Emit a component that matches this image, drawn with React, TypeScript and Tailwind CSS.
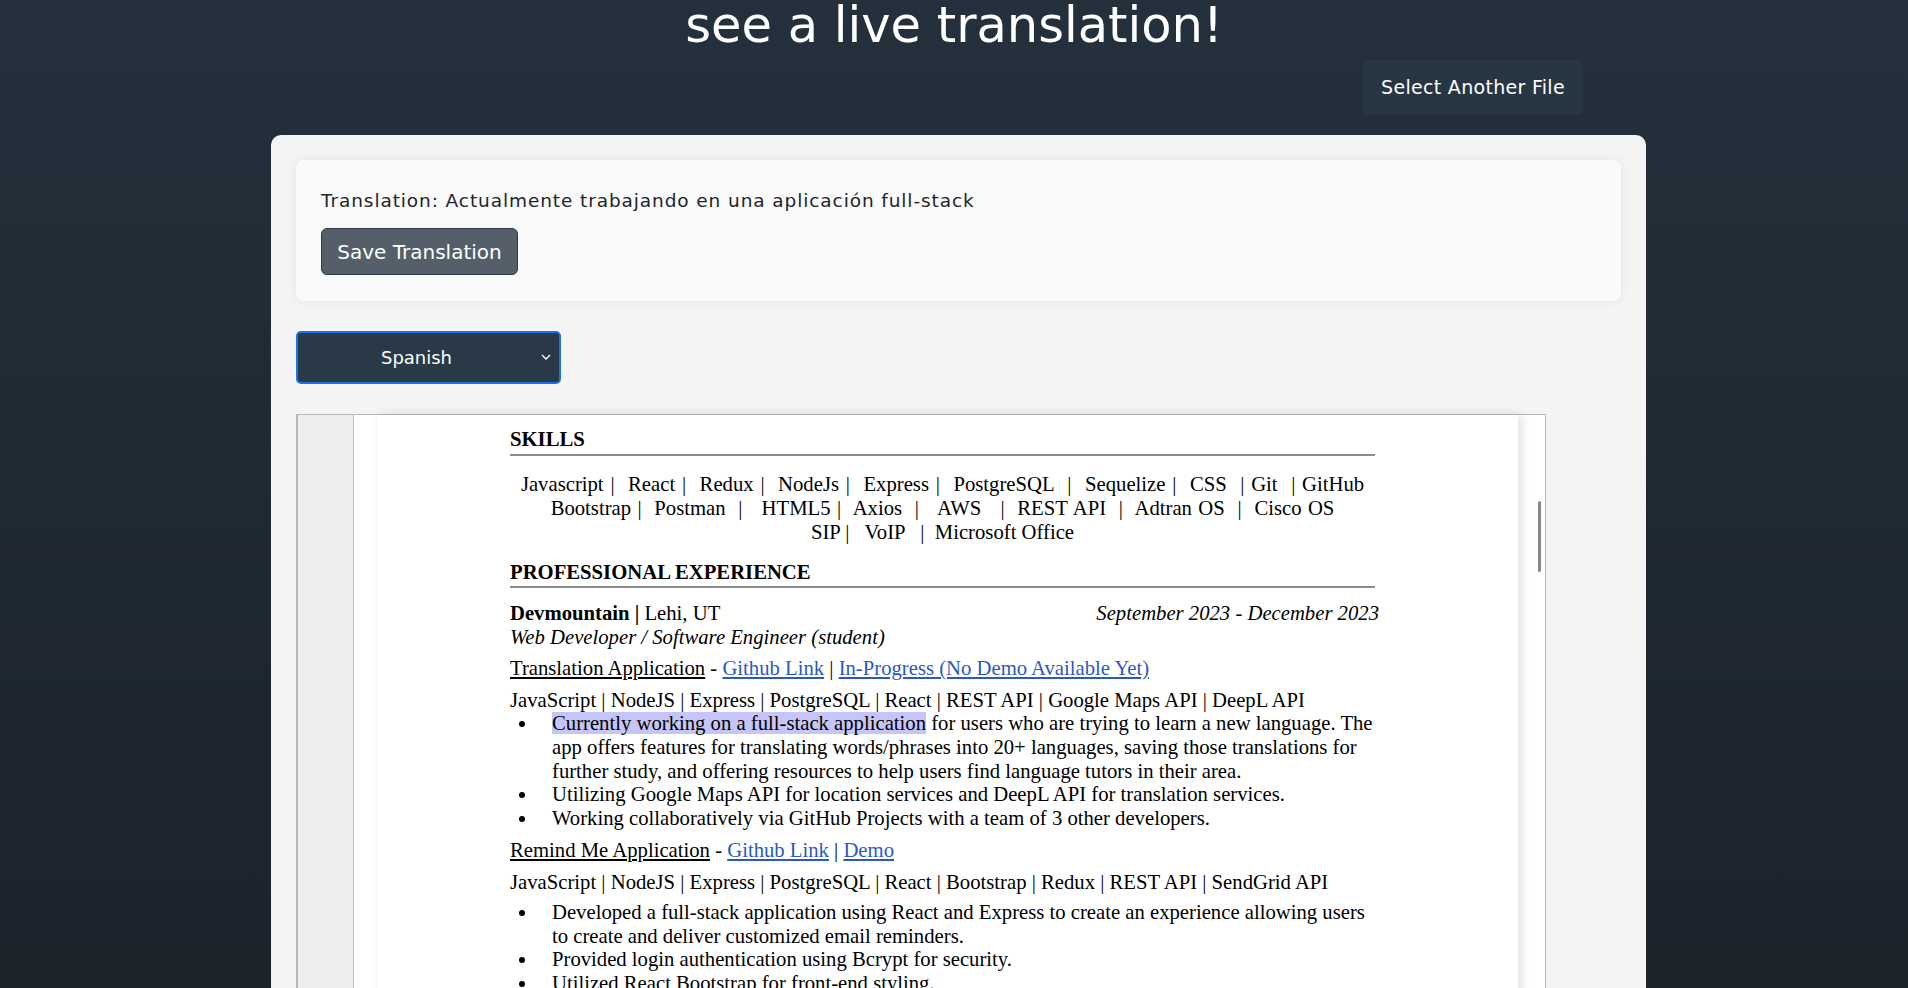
import { useState } from 'react';

const ui = "font-['DejaVu_Sans','Inter',sans-serif]";
const serif = "font-['Liberation_Serif','Times_New_Roman',serif]";

const Bullet = ({ children }: { children: React.ReactNode }) => (
  <div className="flex">
    <span className="w-[42px] shrink-0 pl-[9px] pt-[9px]">
      <span className="block h-[6px] w-[6px] rounded-full bg-black" />
    </span>
    <span>{children}</span>
  </div>
);

const Stack = ({ items }: { items: string[] }) => (
  <div className="whitespace-pre">
    {items.map((it, i) => (
      <span key={it}>
        {i > 0 && ' | '}
        {it}
      </span>
    ))}
  </div>
);

const Resume = () => (
  <div className={`${serif} text-[20.7px] leading-[24px] text-black pt-[12px] pl-[132px] pr-[143px] pb-[200px]`}>
    <div className="font-bold border-b-2 border-[#8c8c8c] pb-[3px]">SKILLS</div>
    <div className="mt-[16px] text-center whitespace-pre">
      <div className="[word-spacing:1.6px]">Javascript |  React |  Redux |  NodeJs |  Express |  PostgreSQL  |  Sequelize |  CSS  | Git  | GitHub</div>
      <div className="[word-spacing:1.2px]">Bootstrap |  Postman  |   HTML5 |  Axios  |   AWS   |  REST API  |  Adtran OS  |  Cisco OS</div>
      <div>SIP |   VoIP   |  Microsoft Office</div>
    </div>

    <div className="mt-[16px] font-bold border-b-2 border-[#8c8c8c] pb-[2px]">PROFESSIONAL EXPERIENCE</div>

    <div className="mt-[13px] flex justify-between">
      <div>
        <span className="font-bold">Devmountain |</span> Lehi, UT
      </div>
      <div className="italic -mr-[4px]">September 2023 - December 2023</div>
    </div>
    <div className="italic">Web Developer / Software Engineer (student)</div>

    <div className="mt-[7px]">
      <span className="underline">Translation Application</span> -{' '}
      <span className="underline text-[#2b59c3]">Github Link</span> |{' '}
      <span className="underline text-[#2b59c3]">In-Progress (No Demo Available Yet)</span>
    </div>
    <div className="mt-[8px]">
      <Stack items={['JavaScript', 'NodeJS', 'Express', 'PostgreSQL', 'React', 'REST API', 'Google Maps API', 'DeepL API']} />
    </div>
    <div className="leading-[23.75px]">
      <Bullet>
        <span className="bg-[#c6c5f7]">Currently working on a full-stack application</span> for users who are trying to learn a new language. The
        <br />
        app offers features for translating words/phrases into 20+ languages, saving those translations for
        <br />
        further study, and offering resources to help users find language tutors in their area.
      </Bullet>
      <Bullet>Utilizing Google Maps API for location services and DeepL API for translation services.</Bullet>
      <Bullet>Working collaboratively via GitHub Projects with a team of 3 other developers.</Bullet>
    </div>

    <div className="mt-[7px]">
      <span className="underline">Remind Me Application</span> -{' '}
      <span className="underline text-[#2b59c3]">Github Link</span> |{' '}
      <span className="underline text-[#2b59c3]">Demo</span>
    </div>
    <div className="mt-[8px]">
      <Stack items={['JavaScript', 'NodeJS', 'Express', 'PostgreSQL', 'React', 'Bootstrap', 'Redux', 'REST API', 'SendGrid API']} />
    </div>
    <div className="mt-[7px] leading-[23.75px]">
      <Bullet>
        Developed a full-stack application using React and Express to create an experience allowing users
        <br />
        to create and deliver customized email reminders.
      </Bullet>
      <Bullet>Provided login authentication using Bcrypt for security.</Bullet>
      <Bullet>Utilized React Bootstrap for front-end styling.</Bullet>
    </div>
  </div>
);

const App = () => {
  const [lang, setLang] = useState('Spanish');

  return (
    <div className={`${ui} h-screen w-full overflow-hidden bg-linear-to-b from-[#24303c] to-[#1b232b]`}>
      <h1 className="-mt-[3px] text-center text-[49.5px] leading-[57px] font-medium text-white">
        see a live translation!
      </h1>

      <div className="ml-[271px] mt-[6px] flex w-[1375px] justify-end pr-[63px]">
        <button className="h-[55px] w-[220px] rounded-[5px] bg-[#283643] text-[19px] tracking-[0.3px] text-white">
          Select Another File
        </button>
      </div>

      <div className="ml-[271px] mt-[20px] w-[1375px] rounded-[10px] bg-[#f4f4f4] p-[25px] pb-[400px]">
        <div className="rounded-[8px] bg-[#fafafa] px-[25px] pt-[27px] pb-[26px] shadow-[0_0_10px_rgba(0,0,0,0.07)]">
          <p className="text-[18.5px] leading-[27px] tracking-[0.9px] text-[#212529]">
            Translation: Actualmente trabajando en una aplicación full-stack
          </p>
          <button className="mt-[14px] h-[47px] w-[197px] rounded-[6px] border border-[#2e3a46] bg-[#545f6a] text-[20px] text-white">
            Save Translation
          </button>
        </div>

        <div className="mt-[30px] relative h-[53px] w-[265px]">
          <select
            value={lang}
            onChange={(e) => setLang(e.target.value)}
            className="h-full w-full appearance-none rounded-[5px] border-2 border-[#1a73e8] bg-[#2a3947] pr-[24px] text-center text-[18px] text-white outline-none"
          >
            <option>Spanish</option>
            <option>French</option>
            <option>German</option>
          </select>
          <svg
            className="pointer-events-none absolute right-[10px] top-[23px]"
            width="10"
            height="7"
            viewBox="0 0 10 7"
            fill="none"
            stroke="white"
            strokeWidth="1.4"
          >
            <path d="M1 1l4 4 4-4" />
          </svg>
        </div>

        <div className="mt-[30px] flex h-[700px] w-[1250px] border border-[#b8b8b8] border-l-2">
          <div className="w-[56px] shrink-0 border-r border-[#bdbdbd] bg-[#ededed]" />
          <div className="relative flex flex-1 bg-white pl-[24px] pr-[26px]">
            <div className="w-[1140px] bg-white shadow-[3px_0_10px_rgba(0,0,0,0.14)]">
              <Resume />
            </div>
            <div className="absolute right-[4px] top-[86px] h-[71px] w-[3px] rounded-full bg-[#888]" />
          </div>
        </div>
      </div>
    </div>
  );
};

export default App;
